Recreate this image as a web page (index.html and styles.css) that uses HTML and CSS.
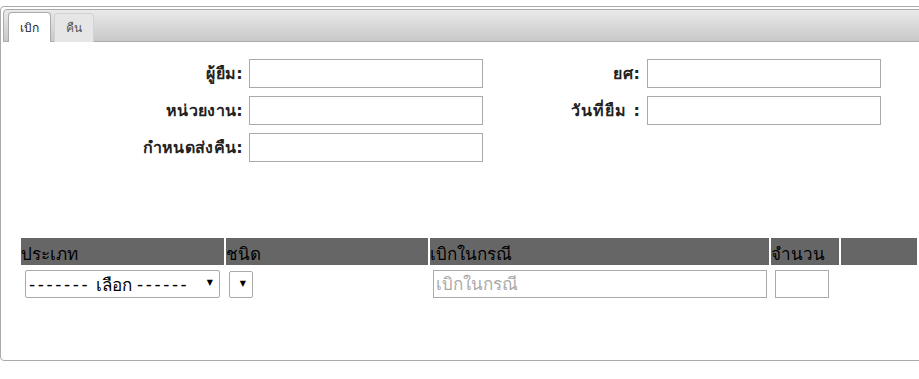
FILE: index.html
```html
<!DOCTYPE html>
<html lang="th">
<head>
<meta charset="utf-8">
<link rel="stylesheet" href="styles.css">
</head>
<body>
<div class="tabs">
  <div class="tab-bar">
    <span class="tab active">เบิก</span>
    <span class="tab">คืน</span>
  </div>
  <div class="panel">
    <div class="form">
      <div class="col">
        <div class="row"><label class="lbl">ผู้ยืม:</label><input class="field" type="text"></div>
        <div class="row"><label class="lbl">หน่วยงาน:</label><input class="field" type="text"></div>
        <div class="row"><label class="lbl">กำหนดส่งคืน:</label><input class="field" type="text"></div>
      </div>
      <div class="col col2">
        <div class="row"><label class="lbl">ยศ:</label><input class="field" type="text"></div>
        <div class="row"><label class="lbl">วันที่ยืม :</label><input class="field" type="text"></div>
      </div>
    </div>
    <table class="items">
      <thead>
        <tr>
          <th class="c1">ประเภท</th>
          <th class="c2">ชนิด</th>
          <th class="c3">เบิกในกรณี</th>
          <th class="c4">จำนวน</th>
          <th class="c5"></th>
        </tr>
      </thead>
      <tbody>
        <tr>
          <td><span class="select wide"><span class="dash">-------</span> เลือก <span class="dash">------</span><span class="arrow">▼</span></span></td>
          <td><span class="select narrow"><span class="arrow">▼</span></span></td>
          <td><input class="case" type="text" placeholder="เบิกในกรณี"></td>
          <td><input class="qty" type="text"></td>
          <td></td>
        </tr>
      </tbody>
    </table>
  </div>
</div>
</body>
</html>
```
FILE: styles.css
```css
html, body {
  margin: 0;
  padding: 0;
  overflow: hidden;
  background: #fff;
}
body {
  font-family: Tahoma, "DejaVu Sans", "Noto Sans", sans-serif;
  color: #222;
}
.tabs {
  margin-top: 6px;
  width: 940px;
  height: 355px;
  border: 1px solid #aaa;
  border-radius: 4px;
  padding: 2px;
  box-sizing: border-box;
  background: #fff;
}
.tab-bar {
  height: 33px;
  box-sizing: border-box;
  border: 1px solid #aaa;
  border-radius: 4px 4px 0 0;
  background: linear-gradient(#e9e9e9, #c9c9c9);
  display: flex;
  align-items: flex-end;
  padding-left: 4px;
  gap: 3px;
}
.tab {
  box-sizing: border-box;
  border: 1px solid #d3d3d3;
  border-bottom: none;
  border-radius: 4px 4px 0 0;
  background: #e6e6e6;
  color: #555;
  font-size: 12px;
  line-height: 28px;
  padding: 0 11px;
  margin-bottom: -1px;
  height: 29px;
}
.tab.active {
  background: #fff;
  border-color: #aaa;
  color: #212121;
  height: 30px;
  line-height: 30px;
}
.panel {
  padding: 17px 0 0 18px;
}
.form {
  display: flex;
}
.col {
  display: flex;
  flex-direction: column;
  gap: 8px;
}
.col2 {
  margin-left: 44px;
}
.row {
  display: flex;
  align-items: center;
  gap: 6px;
}
.col .lbl {
  width: 222px;
  text-align: right;
  font-size: 16px;
  font-weight: bold;
  color: #222;
  letter-spacing: 0.3px;
}
.col2 .lbl {
  width: 114px;
  letter-spacing: 1px;
}
.field {
  width: 234px;
  height: 29px;
  box-sizing: border-box;
  border: 1px solid #aaa;
  margin: 0;
  padding: 2px 4px;
  font-size: 14px;
}
.items {
  margin-top: 74px;
  border-spacing: 2px;
  margin-left: -2px;
  width: 900px;
}
.items th {
  background: #666;
  color: #000;
  font-weight: normal;
  font-size: 17px;
  text-align: left;
  height: 27px;
  padding: 0;
  vertical-align: bottom;
  line-height: 21px;
}
.c1 { width: 203px; }
.c2 { width: 202px; }
.c3 { width: 339px; }
.c4 { width: 68px; }
.items td {
  padding: 3px 0 0 0;
  vertical-align: top;
}
.select {
  display: inline-flex;
  align-items: center;
  box-sizing: border-box;
  height: 28px;
  border: 1px solid #aaa;
  border-radius: 2px;
  font-size: 17px;
  color: #000;
  position: relative;
  background: #fff;
}
.select.wide {
  width: 195px;
  margin-left: 4px;
  padding-left: 3px;
  white-space: pre;
}
.dash {
  letter-spacing: 2.6px;
}
.select.narrow {
  width: 24px;
  height: 27px;
  margin-left: 3px;
  margin-top: 1px;
}
.arrow {
  position: absolute;
  right: 6px;
  top: 8px;
  font-size: 8px;
  line-height: 8px;
  letter-spacing: 0;
}
.case {
  width: 334px;
  height: 28px;
  box-sizing: border-box;
  border: 1px solid #aaa;
  margin: 0 0 0 3px;
  padding: 0 2px;
  font-size: 17px;
  font-family: inherit;
}
.case::placeholder {
  color: #aaa;
}
.qty {
  width: 54px;
  height: 28px;
  box-sizing: border-box;
  border: 1px solid #aaa;
  margin: 0 0 0 4px;
  padding: 0;
}
```
